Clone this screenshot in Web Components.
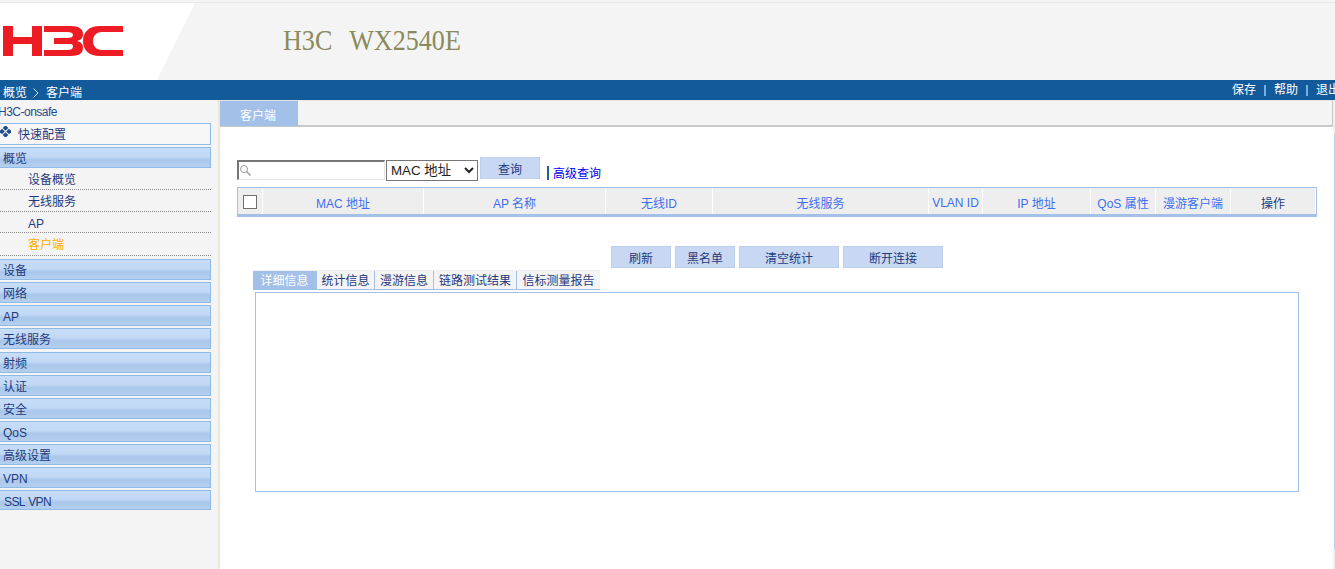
<!DOCTYPE html>
<html lang="zh">
<head>
<meta charset="utf-8">
<title>H3C WX2540E</title>
<style>
  html, body { margin: 0; height: 100%; overflow: hidden; background: #fff; }
  body { font: 12px "Liberation Sans", "Noto Sans CJK SC", sans-serif; color: #1f3a7d; }
</style>
</head>
<body>
<h3c-banner title-text="H3C  WX2540E"></h3c-banner>
<h3c-crumbs></h3c-crumbs>
<h3c-shell>
  <h3c-sidebar slot="side">
    <h3c-menu-head>快速配置</h3c-menu-head>
    <h3c-menu-group>概览</h3c-menu-group>
    <h3c-menu-list>
      <h3c-menu-item>设备概览</h3c-menu-item>
      <h3c-menu-item>无线服务</h3c-menu-item>
      <h3c-menu-item style="height:21px">AP</h3c-menu-item>
      <h3c-menu-item active style="height:23px;line-height:25px">客户端</h3c-menu-item>
    </h3c-menu-list>
    <h3c-menu-group>设备</h3c-menu-group>
    <h3c-menu-group>网络</h3c-menu-group>
    <h3c-menu-group>AP</h3c-menu-group>
    <h3c-menu-group>无线服务</h3c-menu-group>
    <h3c-menu-group>射频</h3c-menu-group>
    <h3c-menu-group>认证</h3c-menu-group>
    <h3c-menu-group>安全</h3c-menu-group>
    <h3c-menu-group>QoS</h3c-menu-group>
    <h3c-menu-group>高级设置</h3c-menu-group>
    <h3c-menu-group>VPN</h3c-menu-group>
    <h3c-menu-group tight>SSL VPN</h3c-menu-group>
  </h3c-sidebar>
  <h3c-client-page></h3c-client-page>
</h3c-shell>

<script>
// small helper so every element below just hands over its css + markup
class ShadowEl extends HTMLElement {
  constructor(html) {
    super();
    this.attachShadow({ mode: "open" });
    this.shadowRoot.innerHTML = html;
  }
}

class H3cBanner extends ShadowEl {
  constructor() {
    super(`
    <style>
      :host { display: flex; align-items: flex-start; height: 80px; position: relative; background: #f4f4f4; box-sizing: border-box; }
      .line { position: absolute; left: 0; right: 0; top: 2px; height: 1px; background: #e9e9e9; }
      .white { position: absolute; left: 0; top: 3px; width: 195px; height: 77px; background: #fff; clip-path: polygon(0 0, 100% 0, 157px 100%, 0 100%); }
      svg { position: relative; margin: 26px 0 0 3px; flex: none; }
      .title { position: relative; margin: 20px 0 0 160px; font: 30px/40px "Liberation Serif", serif; color: #8a8a5c; white-space: pre; word-spacing: 2.500px; transform: scaleX(.87); transform-origin: 0 0; }
    </style>
    <div class="line"></div>
    <div class="white"></div>
    <svg width="120" height="30" viewBox="0 0 120 30" aria-label="H3C">
      <g fill="#ed1c24">
        <path d="M0 0h10v11h19V0h10v30H29V18H10v12H0z"/>
        <path d="M41 0h27c8 0 12 3 12 8 0 4-2 6-6 7 4 1 6 3 6 7 0 5-4 8-12 8H41v-6h23c4 0 6-1 6-3.500S68 18 64 18H51v-6h13c4 0 6-1 6-3s-2-3-6-3H41z"/>
        <path d="M120 0v6H99c-6 0-9 4-9 9s3 9 9 9h21v6H97C86 30 80 24 80 15S86 0 97 0z"/>
      </g>
    </svg>
    <div class="title"></div>`);
    this.shadowRoot.querySelector(".title").textContent = this.getAttribute("title-text");
  }
}

class H3cCrumbs extends ShadowEl {
  constructor() {
    super(`
    <style>
      :host { display: flex; justify-content: space-between; height: 20px; background: #125a9a; color: #fff; overflow: hidden; font-size: 12px; }
      .path { display: flex; align-items: center; gap: 6px; padding: 5px 0 0 3px; line-height: 16px; }
      .path svg { margin-right: 1px; }
      .acts { display: flex; align-items: center; margin-right: -5px; line-height: 16px; white-space: nowrap; }
      .sep { width: 2px; height: 11px; background: #6fb0e8; margin: 0 8px 0 8px; }
    </style>
    <div class="path"><span>概览</span>
      <svg width="6" height="10" viewBox="0 0 6 10"><path d="M.5.5 5 5 .5 9.500" fill="none" stroke="#dce8f4"/></svg>
      <span>客户端</span></div>
    <div class="acts"><span>保存</span><i class="sep"></i><span>帮助</span><i class="sep"></i><span>退出</span></div>`);
  }
}

class H3cShell extends ShadowEl {
  constructor() {
    super(`
    <style>
      :host { display: flex; height: 469px; }
      .side { flex: none; width: 218px; border-right: 2px solid #ece9d8; background: #f4f4f4; overflow: hidden; }
      .main { flex: 1; min-width: 0; background: #fff; }
      /* the frame's scroll edge on the far right */
      .edge { flex: none; width: 2px; display: flex; flex-direction: column; background: #f0f0f0; }
      .edge b { display: block; margin-top: 34px; height: 416px; box-sizing: border-box; background: #fff; border-right: 1px solid #bccdf0; }
    </style>
    <div class="side"><slot name="side"></slot></div>
    <div class="main"><slot></slot></div>
    <div class="edge"><b></b></div>`);
  }
}

class H3cSidebar extends ShadowEl {
  constructor() {
    super(`
    <style>
      :host { display: block; width: 211px; }
      .dev { height: 23px; line-height: 24px; margin-left: -2px; letter-spacing: -.5px; color: #2c4a8c; }
    </style>
    <div class="dev">H3C-onsafe</div>
    <slot></slot>`);
  }
}

class H3cMenuHead extends ShadowEl {
  constructor() {
    super(`
    <style>
      :host { display: flex; align-items: center; height: 22px; box-sizing: border-box; margin: 0 0 2px -1px; width: 212px; padding-bottom: 2px; border: 1px solid #8fbae6; background: #f7f7f7; }
      svg { margin: -4px 7px 0 0; flex: none; }
    </style>
    <svg width="11" height="11" viewBox="0 0 11 11" fill="#1f4a8c"><rect x="3.500" y="0" width="4" height="4" transform="rotate(45 5.500 2)"/><rect x="3.500" y="7" width="4" height="4" transform="rotate(45 5.500 9)"/><rect x="0" y="3.500" width="4" height="4" transform="rotate(45 2 5.500)"/><rect x="7" y="3.500" width="4" height="4" transform="rotate(45 9 5.500)"/></svg>
    <slot></slot>`);
  }
}

class H3cMenuGroup extends ShadowEl {
  constructor() {
    super(`
    <style>
      :host { display: block; box-sizing: border-box; height: 21px; margin: 0 0 2.125px -1px; width: 212px; padding-left: 3px; line-height: 22px;
        border: 1px solid #8fbae6;
        background: linear-gradient(#c6dcf7 0, #c2d9f6 45%, #a9c7ea 62%, #b4cfef 100%); }
      :host([tight]) { height: 20px; padding-left: 4px; letter-spacing: -.6px; word-spacing: 1px; }
    </style>
    <slot></slot>`);
  }
}

class H3cMenuList extends ShadowEl {
  constructor() {
    super(`
    <style>
      :host { display: block; margin: -2.125px 0 3px; }
    </style>
    <slot></slot>`);
  }
}

class H3cMenuItem extends ShadowEl {
  constructor() {
    super(`
    <style>
      :host { display: block; box-sizing: border-box; height: 22px; line-height: 24px; padding-left: 28px; border-bottom: 1px dotted #8a8a8a; }
      :host([active]) { color: #ffaa00; }
    </style>
    <slot></slot>`);
  }
}

class H3cTabStrip extends ShadowEl {
  constructor() {
    super(`
    <style>
      :host { display: flex; height: 27px; box-sizing: border-box; background: #f4f4f4; border-bottom: 2px solid #c8c8c8; border-right: 1px solid #c8c8c8; border-top: 1px solid #e4e4e4; }
      .tab { width: 78px; box-sizing: border-box; padding-right: 2px; background: #a3c0e8; color: #fff; text-align: center; line-height: 31px; height: 25px; }
    </style>
    <div class="tab"><slot></slot></div>`);
  }
}

class H3cSearch extends ShadowEl {
  constructor() {
    super(`
    <style>
      :host { display: flex; align-items: flex-start; height: 30px; padding-left: 17px; font-size: 12px; }
      .box { position: relative; flex: none; margin-top: 3px; }
      input { display: block; width: 148px; height: 20px; box-sizing: border-box; margin: 0; padding: 0 0 0 14px; border-style: solid; border-color: #767676 #e4e4e4 #e4e4e4 #767676; border-width: 2px 1px 1px 2px; background: #fff; }
      svg { position: absolute; left: 2px; top: 4px; }
      select { flex: none; margin: 3px 0 0 1px; width: 92px; height: 21px; padding: 0; font: 13.333px "Liberation Sans", "Noto Sans CJK SC", sans-serif; color: #222; background: #fff; border: 1px solid #767676; border-radius: 0; }
      h3c-button { margin: 0 0 0 2px; --w: 60px; }
      .bar { width: 2px; height: 14px; background: #1f5f9f; margin: 9px 4px 0 7px; flex: none; }
      a { color: #0000ee; text-decoration: none; margin-top: 8px; line-height: 18px; }
    </style>
    <div class="box">
      <input type="text" aria-label="search">
      <svg width="13" height="13" viewBox="0 0 13 13" fill="none" stroke="#9a9a9a"><circle cx="5" cy="5" r="3.500"/><path d="M7.500 7.500l4 4" stroke-width="1.500"/></svg>
    </div>
    <select><option>MAC 地址</option></select>
    <h3c-button>查询</h3c-button>
    <span class="bar"></span>
    <a href="#">高级查询</a>`);
  }
}

class H3cButton extends ShadowEl {
  constructor() {
    super(`
    <style>
      :host { display: block; flex: none; box-sizing: border-box; width: var(--w, 60px); height: 22px; line-height: 24px; text-align: center; background: #c8d8f2; border: 1px solid #bcd0ee; color: #1f3a7d; }
    </style>
    <slot></slot>`);
  }
}

class H3cGrid extends ShadowEl {
  constructor() {
    super(`
    <style>
      :host { display: grid; grid-template-columns: 25px 161px 182px 107px 216px 54px 108px 65px 75px 85px; box-sizing: border-box; width: 1080px; height: 30px; margin-left: 17px; border: 1px solid #a3c0e8; border-bottom-width: 3px; background: #eee; }
      div { display: flex; align-items: center; justify-content: center; box-sizing: border-box; border-right: 1px solid #fff; color: #3f6ff0; white-space: nowrap; padding-top: 3px; }
      div:last-child { color: #1f3a7d; }
      i { display: block; width: 14px; height: 14px; box-sizing: border-box; border: 1px solid #707070; background: #fff; margin-top: -2px; }
    </style>
    <div><i></i></div>
    <div>MAC 地址</div><div>AP 名称</div><div>无线ID</div><div>无线服务</div>
    <div>VLAN ID</div><div>IP 地址</div><div>QoS 属性</div><div>漫游客户端</div><div>操作</div>`);
  }
}

class H3cDetailTabs extends ShadowEl {
  constructor() {
    super(`
    <style>
      :host { display: flex; width: 347px; height: 20px; box-sizing: border-box; margin-left: 33px; background: #f4f4f4; border-bottom: 1px solid #a3c0e8; border-top: 1px solid #f0f0f0; }
      span { box-sizing: border-box; text-align: center; line-height: 20px; border-right: 1px solid #a3c0e8; white-space: nowrap; }
      .on { background: #a3c0e8; color: #fff; }
      span:last-child { border-right: 0; }
    </style>
    <span class="on" style="width:64px">详细信息</span>
    <span style="width:58px">统计信息</span>
    <span style="width:59px">漫游信息</span>
    <span style="width:83px">链路测试结果</span>
    <span style="width:83px">信标测量报告</span>`);
  }
}

class H3cClientPage extends ShadowEl {
  constructor() {
    super(`
    <style>
      :host { display: block; }
      h3c-search { margin-top: 30px; }
      .actions { display: flex; gap: 4px; margin: 29px 0 2px 391px; }
      .panel { box-sizing: border-box; width: 1044px; height: 200px; margin: 2px 0 0 35px; border: 1px solid #a3c0e8; background: #fff; }
    </style>
    <h3c-tab-strip>客户端</h3c-tab-strip>
    <h3c-search></h3c-search>
    <h3c-grid></h3c-grid>
    <div class="actions">
      <h3c-button>刷新</h3c-button>
      <h3c-button>黑名单</h3c-button>
      <h3c-button style="--w:100px">清空统计</h3c-button>
      <h3c-button style="--w:100px">断开连接</h3c-button>
    </div>
    <h3c-detail-tabs></h3c-detail-tabs>
    <div class="panel"></div>`);
  }
}

customElements.define("h3c-banner", H3cBanner);
customElements.define("h3c-crumbs", H3cCrumbs);
customElements.define("h3c-shell", H3cShell);
customElements.define("h3c-sidebar", H3cSidebar);
customElements.define("h3c-menu-head", H3cMenuHead);
customElements.define("h3c-menu-group", H3cMenuGroup);
customElements.define("h3c-menu-list", H3cMenuList);
customElements.define("h3c-menu-item", H3cMenuItem);
customElements.define("h3c-tab-strip", H3cTabStrip);
customElements.define("h3c-search", H3cSearch);
customElements.define("h3c-button", H3cButton);
customElements.define("h3c-grid", H3cGrid);
customElements.define("h3c-detail-tabs", H3cDetailTabs);
customElements.define("h3c-client-page", H3cClientPage);
</script>
</body>
</html>
